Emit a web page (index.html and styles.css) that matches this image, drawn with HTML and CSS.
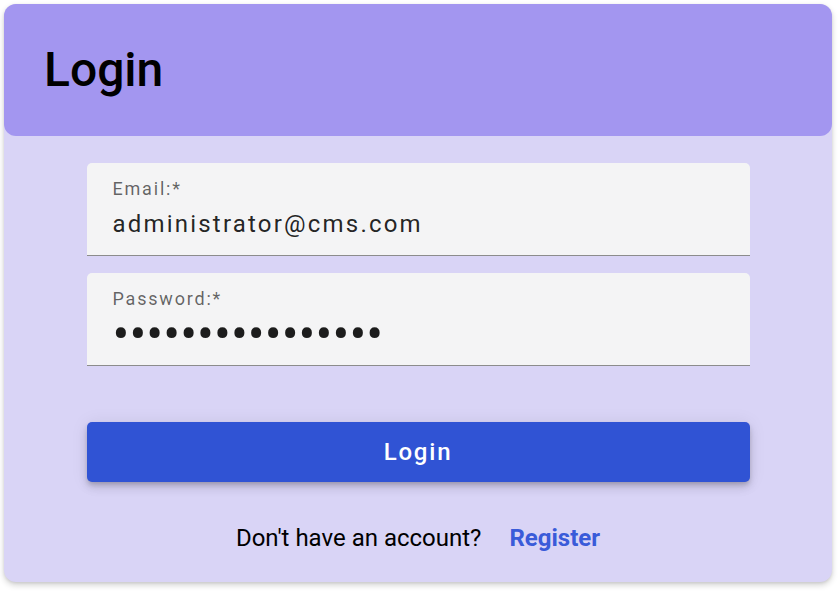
FILE: index.html
```html
<!DOCTYPE html>
<html lang="en">
<head>
<meta charset="utf-8">
<title>Login</title>
<link rel="stylesheet" href="styles.css">
</head>
<body>
<main class="card">
  <header class="card-header">
    <h1 class="title">Login</h1>
  </header>
  <form class="form">
    <div class="field">
      <label class="field-label" for="email">Email:*</label>
      <input class="field-input" id="email" type="email" value="administrator@cms.com">
    </div>
    <div class="field">
      <label class="field-label" for="password">Password:*</label>
      <input class="field-input field-password" id="password" type="password" value="administrator123">
    </div>
    <button class="btn" type="button">Login</button>
    <p class="footer">
      <span class="footer-text">Don't have an account?</span>
      <a class="footer-link" href="#">Register</a>
    </p>
  </form>
</main>
</body>
</html>
```

FILE: styles.css
```css
* { box-sizing: border-box; }

html, body {
  background: #ffffff;
}

body {
  margin: 0;
  padding: 4px 7px 10px 4px;
  font-family: Roboto, "Liberation Sans", Arial, sans-serif;
}

.card {
  width: 828px;
  height: 578px;
  background: #d9d4f6;
  border-radius: 12px;
  box-shadow: 0 3px 6px rgba(0, 0, 0, 0.18), 0 1px 3px rgba(0, 0, 0, 0.08);
  display: flex;
  flex-direction: column;
}

.card-header {
  height: 132px;
  background: #a396f0;
  border-radius: 12px;
  display: flex;
  align-items: center;
  padding-left: 40px;
}

.title {
  margin: 0;
  font-size: 48px;
  font-weight: 500;
  line-height: 1;
  color: #000000;
}

.form {
  width: 663px;
  margin: 0 auto;
  padding-top: 27px;
  display: flex;
  flex-direction: column;
}

.field {
  height: 93px;
  background: #f4f4f5;
  border-radius: 5px 5px 0 0;
  border-bottom: 1px solid #8c8c8c;
  padding: 17px 26px 0;
  display: flex;
  flex-direction: column;
}

.field + .field {
  margin-top: 17px;
}

.field-label {
  font-size: 18px;
  line-height: 18px;
  letter-spacing: 0.1em;
  color: rgba(0, 0, 0, 0.6);
}

.field-input {
  margin-top: 11px;
  height: 30px;
  padding: 0;
  border: 0;
  outline: none;
  background: transparent;
  font-family: Roboto, "Liberation Sans", Arial, sans-serif;
  font-size: 24px;
  line-height: 30px;
  letter-spacing: 2.2px;
  color: rgba(0, 0, 0, 0.87);
}

.field-password {
  font-size: 50px;
  letter-spacing: 0.05px;
  color: #1c1c1c;
}

.btn {
  margin-top: 56px;
  height: 60px;
  border: 0;
  border-radius: 5px;
  background: #3053d4;
  color: #ffffff;
  font-family: Roboto, "Liberation Sans", Arial, sans-serif;
  font-size: 24px;
  font-weight: 500;
  letter-spacing: 0.075em;
  box-shadow: 0 3px 5px -1px rgba(0, 0, 0, 0.2), 0 6px 10px 0 rgba(0, 0, 0, 0.1), 0 1px 18px 0 rgba(0, 0, 0, 0.08);
}

.footer {
  margin: 40px 0 0;
  display: flex;
  justify-content: center;
  gap: 28px;
  font-size: 24px;
  line-height: 32px;
}

.footer-text {
  color: #000000;
}

.footer-link {
  color: #3a5bd9;
  font-weight: 700;
  text-decoration: none;
}
```
